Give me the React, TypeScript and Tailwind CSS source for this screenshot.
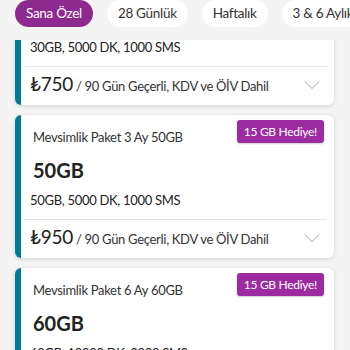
interface Pack {
  title?: string;
  size?: string;
  specs: string;
  price: string;
  badge?: string;
}

const tabs = ['Sana Özel', '28 Günlük', 'Haftalık', '3 & 6 Aylık'];

const packs: Pack[] = [
  { specs: '30GB, 5000 DK, 1000 SMS', price: '750' },
  { title: 'Mevsimlik Paket 3 Ay 50GB', size: '50GB', specs: '50GB, 5000 DK, 1000 SMS', price: '950', badge: '15 GB Hediye!' },
  { title: 'Mevsimlik Paket 6 Ay 60GB', size: '60GB', specs: '60GB, 10000 DK, 3000 SMS', price: '1150', badge: '15 GB Hediye!' },
];

const Chevron = () => (
  <svg width="16" height="10" viewBox="0 0 16 10" fill="none" stroke="#a0a0a0" strokeWidth="1">
    <polyline points="1,1.5 8,8.5 15,1.5" />
  </svg>
);

const PackCard = ({ pack, cut }: { pack: Pack; cut?: boolean }) => (
  <div
    className={`flex bg-white shadow-[0_1px_4px_rgba(0,0,0,0.14)] overflow-hidden ${cut ? 'rounded-b-md' : 'rounded-md'}`}
  >
    <div className="w-[6px] shrink-0 bg-[#007c92]" />
    <div className="flex-1 min-w-0 tracking-[-0.3px]">
      {pack.title && (
        <div className="flex items-start justify-between pl-3 pr-[10px]">
          <p className="pt-[13px] text-[13px] leading-[18px] text-[#333]">{pack.title}</p>
          <span className="mt-[5px] rounded-[3px] bg-[#9c2aa0] px-[7px] text-[12px] leading-[23px] text-white shadow-[0_1px_2px_rgba(0,0,0,0.2)]">
            {pack.badge}
          </span>
        </div>
      )}
      {pack.size && (
        <p className="pl-3 pt-[11px] text-[20px] font-bold leading-[26px] tracking-normal text-[#222]">{pack.size}</p>
      )}
      <p className={`pl-[9px] text-[13px] leading-[18px] text-[#222] ${cut ? '' : 'pt-[8px]'}`}>
        {pack.specs}
      </p>
      <div className="ml-[2px] mr-[7px] mt-[10px] border-t border-[#e6e6e6]" />
      <div className="flex items-center justify-between pl-[9px] pr-[14px] pt-[6px] pb-[8px]">
        <p className="text-[#222]">
          <span className="text-[19px] leading-[22px]">₺{pack.price}</span>
          <span className="text-[13px] leading-[22px] text-[#333]"> / 90 Gün Geçerli, KDV ve ÖİV Dahil</span>
        </p>
        <Chevron />
      </div>
    </div>
  </div>
);

export default function App() {
  return (
    <div className="h-[350px] w-[350px] overflow-hidden bg-[#f4f4f4] font-['Lato','Noto_Sans',sans-serif]">
      <div className="relative z-10 flex h-[40px] gap-[14px] overflow-hidden bg-[#f4f4f4] pl-[15px]">
        {tabs.map((t, i) => (
          <div
            key={t}
            className={`flex h-[27px] shrink-0 items-center rounded-full px-[11px] text-[13.5px] tracking-[-0.3px] ${
              i === 0 ? 'bg-[#8e2a8f] text-white' : 'bg-white text-[#333]'
            }`}
          >
            {t}
          </div>
        ))}
      </div>
      <div className="-mt-[2px] flex flex-col gap-[10px] pl-[15px] pr-[16px]">
        {packs.map((p, i) => (
          <PackCard key={i} pack={p} cut={i === 0} />
        ))}
      </div>
    </div>
  );
}
